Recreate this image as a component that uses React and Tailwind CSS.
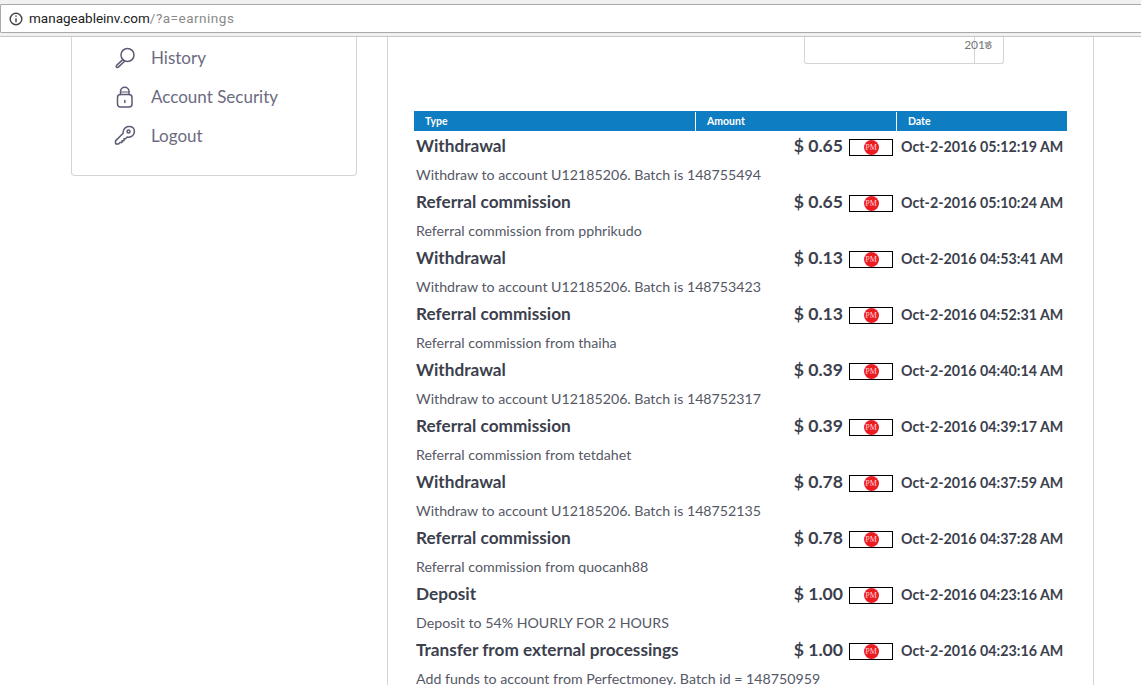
const rows = [
  ["Withdrawal", "$ 0.65", "Oct-2-2016 05:12:19 AM", "Withdraw to account U12185206. Batch is 148755494"],
  ["Referral commission", "$ 0.65", "Oct-2-2016 05:10:24 AM", "Referral commission from pphrikudo"],
  ["Withdrawal", "$ 0.13", "Oct-2-2016 04:53:41 AM", "Withdraw to account U12185206. Batch is 148753423"],
  ["Referral commission", "$ 0.13", "Oct-2-2016 04:52:31 AM", "Referral commission from thaiha"],
  ["Withdrawal", "$ 0.39", "Oct-2-2016 04:40:14 AM", "Withdraw to account U12185206. Batch is 148752317"],
  ["Referral commission", "$ 0.39", "Oct-2-2016 04:39:17 AM", "Referral commission from tetdahet"],
  ["Withdrawal", "$ 0.78", "Oct-2-2016 04:37:59 AM", "Withdraw to account U12185206. Batch is 148752135"],
  ["Referral commission", "$ 0.78", "Oct-2-2016 04:37:28 AM", "Referral commission from quocanh88"],
  ["Deposit", "$ 1.00", "Oct-2-2016 04:23:16 AM", "Deposit to 54% HOURLY FOR 2 HOURS"],
  ["Transfer from external processings", "$ 1.00", "Oct-2-2016 04:23:16 AM", "Add funds to account from Perfectmoney. Batch id = 148750959"],
];

const iconProps = { width: 22, height: 22, viewBox: "0 0 22 22", fill: "none", stroke: "#5b5b75", strokeWidth: 1.5, strokeLinecap: "round", strokeLinejoin: "round" };

const SearchIcon = () => (
  <svg {...iconProps}>
    <circle cx="13.5" cy="8" r="6.5" />
    <path d="M8.8 12.6 2.6 18.4a1.2 1.2 0 0 0 1.8 1.7l6.2-5.9" />
  </svg>
);
const LockIcon = () => (
  <svg {...iconProps}>
    <rect x="3.500" y="8.500" width="14.500" height="12.500" rx="3" />
    <path d="M6.500 8.500V5.500a4.200 4.200 0 0 1 8.500 0v3" />
    <path d="M6.500 6h8.500" strokeWidth="1" />
    <path d="M10.800 14.500v2" />
  </svg>
);
const KeyIcon = () => (
  <svg {...iconProps}>
    <path d="M9.5 5.5A6 6 0 0 1 15 1.6c3.4 0 5.4 2 5.4 4.9 0 3.2-2.6 5.6-5.7 5.8l-1.4-.3-1.8 1.8H10v1.9H8v1.9H6l-1.4 1.500H2.400a.9.9 0 0 1-.9-1v-2.200l7.700-7.600c-.2-1-.1-1.900.3-2.800z" />
    <circle cx="14.500" cy="6.500" r="1.500" />
  </svg>
);

const PmBadge = () => (
  <span className="mt-[3px] flex h-[17px] w-[44px] shrink-0 items-center justify-center border border-black bg-white">
    <span className="flex h-[15px] w-[15px] items-center justify-center rounded-full bg-[#ec1c24] font-['Liberation_Serif',serif] text-[8px] leading-none text-[#ffd5d5]">
      PM
    </span>
  </span>
);

const NavItem = ({ icon, label }) => (
  <div className="flex h-[39px] items-center">
    <span className="flex w-[37px] justify-start">{icon}</span>
    <span className="text-[17px] text-[#6b6b80]">{label}</span>
  </div>
);

const Row = ({ title, amount, date, desc }) => (
  <div className="flex h-[56px] flex-col text-[#3c3f4d]">
    <div className="flex h-[28px] items-center">
      <span className="ml-[2px] text-[17.2px] font-bold">{title}</span>
      <span className="ml-auto text-[17.6px] font-bold leading-none">{amount}</span>
      <span className="ml-[6px]"><PmBadge /></span>
      <span className="ml-[8px] mr-[4px] w-[162px] whitespace-nowrap pt-[1px] text-[14.25px] font-bold">{date}</span>
    </div>
    <div className="ml-[2px] flex h-[28px] items-center pt-[1px] text-[14.2px] text-[#555866]">{desc}</div>
  </div>
);

export default function App() {
  return (
    <div className="h-[685px] w-[1141px] overflow-hidden bg-white font-['Lato','Noto_Sans',sans-serif]">
      <div className="h-[37px] border-b border-[#c8c8c8] bg-[#f1f1f1] pt-[4px]">
        <div className="flex h-[29px] items-center rounded-l-[2px] border-y border-l border-[#a9a9a9] bg-white pl-[8px] font-['Roboto',sans-serif] text-[13.5px]">
          <svg width="14" height="14" viewBox="0 0 14 14" fill="none" stroke="#444" strokeWidth="1.4">
            <circle cx="7" cy="7" r="5.800" />
            <path d="M7 6.200v4M7 3.400v1.400" />
          </svg>
          <span className="ml-[6px] text-[#222]">manageableinv.com</span>
          <span className="tracking-[0.5px] text-[#8a8a8a]">/?a=earnings</span>
        </div>
      </div>
      <div className="flex h-[648px] items-start">
        <aside className="ml-[71px] h-[139px] w-[286px] rounded-b-[4px] border-x border-b border-[#d4d4d8] pl-[42px] pt-[1px]">
          <NavItem icon={<SearchIcon />} label="History" />
          <NavItem icon={<LockIcon />} label="Account Security" />
          <NavItem icon={<KeyIcon />} label="Logout" />
        </aside>
        <main className="ml-[30px] h-full w-[707px] border-x border-[#d4d4d8] px-[26px]">
          <div className="ml-[390px] flex h-[27px] w-[200px] justify-end rounded-b-[3px] border-x border-b border-[#d4d4d8]">
            <div className="relative h-full w-[29px] border-l border-[#d4d4d8]">
              <span className="absolute right-[11px] top-[-1px] text-[12px] text-[#777]">2016</span>
              <span className="absolute right-[11px] top-[5px] h-0 w-0 border-x-[4px] border-t-[6px] border-x-transparent border-t-[#aaa]" />
            </div>
          </div>
          <div className="mt-[47px] flex h-[20px] w-[653px] items-center bg-[#0f7dc2] pt-[1px] text-[10.5px] font-bold text-white">
            <div className="flex h-full w-[282px] items-center border-r border-white pl-[11px]">Type</div>
            <div className="flex h-full w-[201px] items-center border-r border-white pl-[11px]">Amount</div>
            <div className="pl-[11px]">Date</div>
          </div>
          <div className="w-[653px] pt-[1px]">
            {rows.map(([title, amount, date, desc], i) => (
              <Row key={i} title={title} amount={amount} date={date} desc={desc} />
            ))}
          </div>
        </main>
      </div>
    </div>
  );
}
